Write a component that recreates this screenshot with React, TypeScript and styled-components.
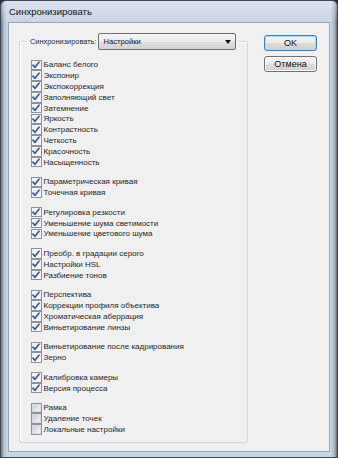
import styled, { createGlobalStyle } from 'styled-components';

const GlobalStyle = createGlobalStyle`
  html, body {
    margin: 0;
    padding: 0;
    background: #2b2f35;
  }
  * {
    box-sizing: border-box;
  }
`;

const FONT = `Tahoma, "Liberation Sans", Arial, sans-serif`;

const Window = styled.div`
  width: 338px;
  height: 458px;
  display: flex;
  flex-direction: column;
  padding: 0 7px 5px 7px;
  border: 1px solid #3f4854;
  border-radius: 6px 6px 0 0;
  background:
    linear-gradient(rgba(255, 255, 255, 0.35), rgba(255, 255, 255, 0) 22px),
    linear-gradient(to right, #6d7784 0, #b3c1d1 3px, #c8d5e3 6px, #c8d5e3 calc(100% - 6px), #9eabb9 calc(100% - 2px), #5c6672 100%);
  font-family: ${FONT};
`;

const TitleBar = styled.div`
  height: 21px;
  display: flex;
  align-items: center;
  padding-left: 1px;
  font-size: 9.5px;
  color: #111;
`;

const Client = styled.div`
  flex: 1;
  display: flex;
  align-items: stretch;
  padding: 10px 0 8px 10px;
  background: #f0f0f0;
  border: 1px solid #9aa6b3;
`;

const Group = styled.fieldset`
  width: 229px;
  margin: 0;
  padding: 9.5px 0 0 11px;
  border: 1px solid #d5d9dd;
  border-radius: 2px;
  box-shadow: inset 1px 1px 0 #fff;
`;

const Legend = styled.legend`
  margin-left: -4px;
  padding: 0 2px 0 3px;
  display: flex;
  align-items: center;
  gap: 1px;
  font-size: 7.4px;
  color: #1e1e1e;
`;

const Select = styled.div`
  width: 138px;
  height: 17px;
  display: flex;
  align-items: center;
  justify-content: space-between;
  padding: 0 4px 0 5px;
  border: 1px solid #707070;
  border-radius: 2px;
  background: linear-gradient(#f5f5f5 0, #ececec 50%, #dedede 51%, #d4d4d4 100%);
  color: #111;
  font-size: 7.6px;
`;

const Arrow = styled.span`
  width: 0;
  height: 0;
  border-left: 3px solid transparent;
  border-right: 3px solid transparent;
  border-top: 4px solid #111;
`;

const Section = styled.div`
  display: flex;
  flex-direction: column;
  & + & {
    margin-top: 8.9px;
  }
`;

const Row = styled.div`
  height: 10.8px;
  display: flex;
  align-items: center;
  gap: 2px;
  font-size: 8px;
  color: #262626;
  white-space: nowrap;
`;

const Box = styled.span<{ $checked: boolean }>`
  width: 10.5px;
  height: 10.5px;
  flex: none;
  display: flex;
  align-items: center;
  justify-content: center;
  border: 1px solid #8f9296;
  background: ${p => p.$checked
    ? 'linear-gradient(135deg, #e8ecf1 0, #fbfbfb 100%)'
    : 'linear-gradient(135deg, #c9ccd1 0, #e4e6e8 60%, #f3f3f3 100%)'};
  box-shadow: inset 0 0 0 1px ${p => (p.$checked ? '#f4f5f7' : '#dadcdf')};
`;

const Buttons = styled.div`
  margin: 2px 0 0 16px;
  display: flex;
  flex-direction: column;
  gap: 5px;
`;

const Button = styled.div<{ $default?: boolean }>`
  width: 53px;
  height: 16px;
  display: flex;
  align-items: center;
  justify-content: center;
  border: 1px solid ${p => (p.$default ? '#3c7fb1' : '#707070')};
  border-radius: 3px;
  background: linear-gradient(#f2f2f2 0, #ebebeb 50%, #dddddd 51%, #cfcfcf 100%);
  box-shadow: inset 0 0 0 1px ${p => (p.$default ? '#a9dbf6' : '#fcfcfc')};
  font-size: 9px;
  color: #111;
`;

function Check() {
  return (
    <svg width="8" height="8" viewBox="0 0 8 8">
      <path d="M1 4.2 L3 6.3 L7 1.2" fill="none" stroke="#3b5a9a" strokeWidth="1.7" strokeLinecap="round" strokeLinejoin="round" />
    </svg>
  );
}

const sections: { label: string; on: boolean }[][] = [
  [
    'Баланс белого', 'Экспонир', 'Экспокоррекция', 'Заполняющий свет', 'Затемнение',
    'Яркость', 'Контрастность', 'Четкость', 'Красочность', 'Насыщенность',
  ].map(label => ({ label, on: true })),
  ['Параметрическая кривая', 'Точечная кривая'].map(label => ({ label, on: true })),
  ['Регулировка резкости', 'Уменьшение шума светимости', 'Уменьшение цветового шума'].map(label => ({ label, on: true })),
  ['Преобр. в градации серого', 'Настройки HSL', 'Разбиение тонов'].map(label => ({ label, on: true })),
  ['Перспектива', 'Коррекции профиля объектива', 'Хроматическая аберрация', 'Виньетирование линзы'].map(label => ({ label, on: true })),
  ['Виньетирование после кадрирования', 'Зерно'].map(label => ({ label, on: true })),
  ['Калибровка камеры', 'Версия процесса'].map(label => ({ label, on: true })),
  ['Рамка', 'Удаление точек', 'Локальные настройки'].map(label => ({ label, on: false })),
];

export default function App() {
  return (
    <>
      <GlobalStyle />
      <Window>
        <TitleBar>Синхронизировать</TitleBar>
        <Client>
          <Group>
            <Legend>
              <span>Синхронизировать:</span>
              <Select>
                <span>Настройки</span>
                <Arrow />
              </Select>
            </Legend>
            {sections.map((items, i) => (
              <Section key={i}>
                {items.map(item => (
                  <Row key={item.label}>
                    <Box $checked={item.on}>{item.on && <Check />}</Box>
                    <span>{item.label}</span>
                  </Row>
                ))}
              </Section>
            ))}
          </Group>
          <Buttons>
            <Button $default>OK</Button>
            <Button>Отмена</Button>
          </Buttons>
        </Client>
      </Window>
    </>
  );
}
